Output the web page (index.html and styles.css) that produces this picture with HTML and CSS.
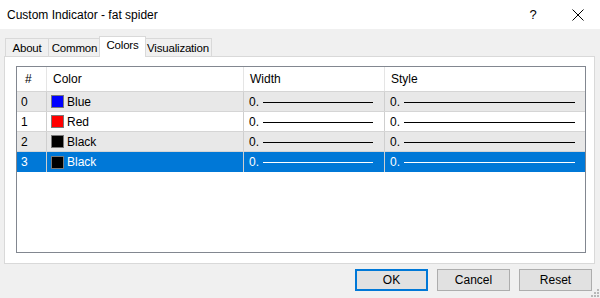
FILE: index.html
```html
<!DOCTYPE html>
<html>
<head>
<meta charset="utf-8">
<link rel="stylesheet" href="styles.css">
</head>
<body>
<div class="window">
  <div class="titlebar">
    <span class="title">Custom Indicator - fat spider</span>
    <div class="title-btns">
      <span class="help">?</span>
      <svg class="close" width="12" height="12" viewBox="0 0 12 12"><path d="M0.5 0.5 L11.5 11.5 M11.5 0.5 L0.5 11.5" stroke="#000" stroke-width="1" fill="none"/></svg>
    </div>
  </div>
  <div class="content">
    <div class="tabs">
      <div class="tab t-about">About</div>
      <div class="tab t-common">Common</div>
      <div class="tab active">Colors</div>
      <div class="tab t-vis">Visualization</div>
    </div>
    <div class="panel">
      <div class="listbox">
        <div class="row head">
          <div class="cell c-num">#</div>
          <div class="cell c-color">Color</div>
          <div class="cell c-width">Width</div>
          <div class="cell c-style">Style</div>
        </div>
        <div class="row odd">
          <div class="cell c-num">0</div>
          <div class="cell c-color"><span class="sw sw-blue"></span>Blue</div>
          <div class="cell c-width">0.<span class="line"></span></div>
          <div class="cell c-style">0.<span class="line"></span></div>
        </div>
        <div class="row">
          <div class="cell c-num">1</div>
          <div class="cell c-color"><span class="sw sw-red"></span>Red</div>
          <div class="cell c-width">0.<span class="line"></span></div>
          <div class="cell c-style">0.<span class="line"></span></div>
        </div>
        <div class="row odd">
          <div class="cell c-num">2</div>
          <div class="cell c-color"><span class="sw sw-black"></span>Black</div>
          <div class="cell c-width">0.<span class="line"></span></div>
          <div class="cell c-style">0.<span class="line"></span></div>
        </div>
        <div class="row selected">
          <div class="cell c-num">3</div>
          <div class="cell c-color"><span class="sw sw-black"></span>Black</div>
          <div class="cell c-width">0.<span class="line"></span></div>
          <div class="cell c-style">0.<span class="line"></span></div>
        </div>
      </div>
    </div>
    <div class="buttons">
      <button class="btn default">OK</button>
      <button class="btn">Cancel</button>
      <button class="btn">Reset</button>
    </div>
  </div>
  <svg class="grip" width="8" height="8" viewBox="0 0 8 8">
    <rect x="6" y="0" width="2" height="2" fill="#b8b8b8"/>
    <rect x="3" y="3" width="2" height="2" fill="#b8b8b8"/>
    <rect x="6" y="3" width="2" height="2" fill="#b8b8b8"/>
    <rect x="0" y="6" width="2" height="2" fill="#b8b8b8"/>
    <rect x="3" y="6" width="2" height="2" fill="#b8b8b8"/>
    <rect x="6" y="6" width="2" height="2" fill="#b8b8b8"/>
  </svg>
</div>
</body>
</html>
```
FILE: styles.css
```css
* { box-sizing: border-box; }
html, body { margin: 0; padding: 0; }
body {
  width: 600px;
  height: 298px;
  overflow: hidden;
  font-family: "Liberation Sans", Arial, sans-serif;
  font-size: 12px;
  color: #000;
  background: #f0f0f0;
}
.window {
  position: relative;
  width: 600px;
  height: 298px;
  display: flex;
  flex-direction: column;
}
.titlebar {
  height: 29px;
  background: #fff;
  display: flex;
  align-items: center;
  justify-content: space-between;
  padding-left: 7px;
}
.title { font-size: 12px; }
.title-btns {
  display: flex;
  align-items: center;
  height: 100%;
}
.help {
  width: 20px;
  text-align: center;
  font-size: 13px;
  margin-right: 29px;
}
.close {
  margin-right: 16px;
  margin-top: 1px;
}
.content {
  flex: 1;
  display: flex;
  flex-direction: column;
  padding: 7px 5px 0 4px;
}
.tabs {
  display: flex;
  height: 20px;
  padding-left: 1px;
  align-items: flex-end;
  position: relative;
  z-index: 1;
}
.tab {
  height: 18px;
  border: 1px solid #d9d9d9;
  border-bottom: none;
  background: #f0f0f0;
  padding: 2px 0 0 0;
  margin-right: -1px;
  line-height: 15px;
  white-space: nowrap;
  text-align: center;
  font-size: 11.5px;
  letter-spacing: -0.2px;
}
.t-about { width: 44px; }
.t-common { width: 53px; }
.t-vis { width: 68px; }
.tab.active {
  height: 21px;
  width: 47px;
  background: #fff;
  margin-bottom: -1px;
  padding-top: 1px;
  margin-left: -1px;
  margin-right: -2px;
  position: relative;
  z-index: 2;
}
.panel {
  height: 208px;
  background: #fff;
  border: 1px solid #d9d9d9;
  padding: 9px 8px 10px 11px;
  display: flex;
}
.listbox {
  flex: 1;
  border: 1px solid #828790;
  background: #fff;
}
.row {
  display: grid;
  grid-template-columns: 30px 197px 141px 1fr;
  height: 20px;
  border-bottom: 1px solid #d5d5d5;
}
.row.head {
  height: 25px;
}
.row.odd { background: #e8e8e8; }
.row.selected { background: #0078d7; color: #fff; border-bottom: none; }
.cell {
  display: flex;
  align-items: center;
  border-right: 1px solid #cfcfcf;
  padding-left: 4px;
  overflow: hidden;
  white-space: nowrap;
}
.head .cell { border-right-color: #e5e5e5; padding-left: 6px; }
.head .c-num { padding-left: 8px; }
.c-style, .head .c-style { border-right: none; }
.sw {
  width: 13px;
  height: 13px;
  border: 1px solid #7a7a7a;
  margin-right: 3px;
  flex: none;
}
.sw-blue { background: #0000ff; }
.sw-red { background: #ff0000; }
.sw-black { background: #000; }
.c-width, .c-style { padding-left: 5px; }
.line {
  height: 1px;
  background: #000;
  margin-left: 4px;
  margin-right: 11px;
  flex: 1;
  margin-top: 1px;
}
.c-style .line { margin-right: 10px; }
.selected .line { background: #fff; }
.buttons {
  display: flex;
  justify-content: flex-end;
  gap: 9px;
  padding-top: 5px;
  padding-right: 3px;
}
.btn {
  width: 73px;
  height: 22px;
  border: 1px solid #adadad;
  background: #e1e1e1;
  font-family: "Liberation Sans", Arial, sans-serif;
  font-size: 12px;
  color: #000;
  padding: 0;
}
.btn.default { border: 2px solid #0078d7; }
.grip {
  position: absolute;
  right: 1px;
  bottom: 1px;
}
```
